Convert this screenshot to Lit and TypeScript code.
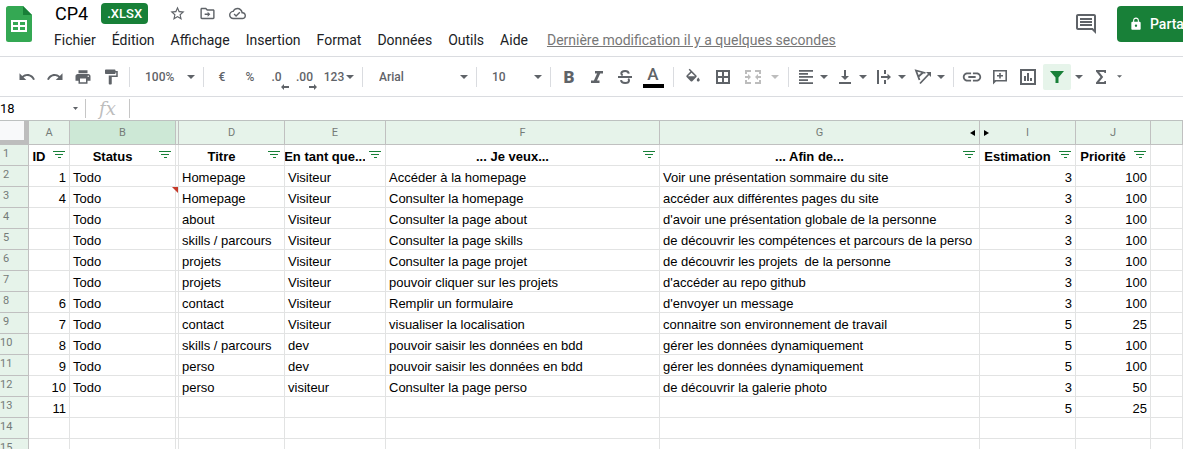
import { LitElement, html, css, svg, nothing } from "lit";
import { customElement } from "lit/decorators.js";
import { classMap } from "lit/directives/class-map.js";

type Align = "left" | "right";
interface Column {
  letter: string;
  width: string;
  title: string;
  align: Align;
  selected?: boolean;
  hiddenAfter?: boolean;
  hiddenBefore?: boolean;
}

const COLUMNS: Column[] = [
  { letter: "A", width: "a", title: "ID", align: "right" },
  { letter: "B", width: "b", title: "Status", align: "left", selected: true },
  { letter: "", width: "c", title: "", align: "left" },
  { letter: "D", width: "d", title: "Titre", align: "left" },
  { letter: "E", width: "e", title: "En tant que...", align: "left" },
  { letter: "F", width: "f", title: "... Je veux...", align: "left" },
  { letter: "G", width: "g", title: "... Afin de...", align: "left", hiddenAfter: true },
  { letter: "I", width: "i", title: "Estimation", align: "right", hiddenBefore: true },
  { letter: "J", width: "j", title: "Priorité", align: "right" },
  { letter: "", width: "rest", title: "", align: "left" },
];

const ROWS: string[][] = [
  ["1", "Todo", "", "Homepage", "Visiteur", "Accéder à la homepage", "Voir une présentation sommaire du site", "3", "100", ""],
  ["4", "Todo", "", "Homepage", "Visiteur", "Consulter la homepage", "accéder aux différentes pages du site", "3", "100", ""],
  ["", "Todo", "", "about", "Visiteur", "Consulter la page about", "d'avoir une présentation globale de la personne", "3", "100", ""],
  ["", "Todo", "", "skills / parcours", "Visiteur", "Consulter la page skills", "de découvrir les compétences et parcours de la perso", "3", "100", ""],
  ["", "Todo", "", "projets", "Visiteur", "Consulter la page projet", "de découvrir les projets  de la personne", "3", "100", ""],
  ["", "Todo", "", "projets", "Visiteur", "pouvoir cliquer sur les projets", "d'accéder au repo github", "3", "100", ""],
  ["6", "Todo", "", "contact", "Visiteur", "Remplir un formulaire", "d'envoyer un message", "3", "100", ""],
  ["7", "Todo", "", "contact", "Visiteur", "visualiser la localisation", "connaitre son environnement de travail", "5", "25", ""],
  ["8", "Todo", "", "skills / parcours", "dev", "pouvoir saisir les données en bdd", "gérer les données dynamiquement", "5", "100", ""],
  ["9", "Todo", "", "perso", "dev", "pouvoir saisir les données en bdd", "gérer les données dynamiquement", "5", "100", ""],
  ["10", "Todo", "", "perso", "visiteur", "Consulter la page perso", "de découvrir la galerie photo", "3", "50", ""],
  ["11", "", "", "", "", "", "", "5", "25", ""],
  ["", "", "", "", "", "", "", "", "", ""],
  ["", "", "", "", "", "", "", "", "", ""],
];

const NOTE_ROW = 3;

const icon24 = (d: string, cls = "ic18", viewBox = "0 0 24 24") =>
  html`<svg class=${cls} viewBox=${viewBox} aria-hidden="true"><path d=${d} /></svg>`;
const icon18 = (d: string) =>
  html`<svg class="ic18" viewBox="0 0 18 18" aria-hidden="true"><path fill-rule="evenodd" d=${d} /></svg>`;
const caret = html`<svg class="caret" viewBox="0 0 8 4" aria-hidden="true"><path d="M0 0h8L4 4z" /></svg>`;

@customElement("sheet-header")
export class SheetHeader extends LitElement {
  static styles = css`
    :host {
      display: flex;
      flex: none;
      height: 56px;
      border-bottom: 1px solid #dadce0;
      background: #fff;
      font-family: Roboto, sans-serif;
      color: #202124;
    }
    button {
      border: 0;
      background: none;
      padding: 0;
      font: inherit;
      color: inherit;
      white-space: nowrap;
    }
    svg { display: block; fill: #5f6368; }
    .logo { flex: none; width: 26px; height: 36px; margin: 6px 15px 0 6px; }
    .titles { flex: 1; min-width: 0; }
    .title-row { display: flex; align-items: center; height: 27px; padding-left: 8px; }
    .title { margin: 0; font-size: 18px; font-weight: 400; line-height: 24px; color: #000; }
    .badge {
      margin: 0 14px 0 13px;
      padding: 0 6px;
      border-radius: 4px;
      background: #188038;
      color: #fff;
      font-size: 13px;
      font-weight: 500;
      line-height: 21px;
    }
    .title-row button { width: 30px; display: flex; justify-content: center; }
    .title-row svg { width: 17px; height: 17px; }
    .menus {
      display: flex;
      align-items: center;
      gap: 16px;
      height: 26px;
      padding-left: 7px;
      font-size: 14px;
      line-height: 24px;
    }
    .menus a { margin-left: 3px; color: #777; white-space: nowrap; text-decoration: underline; }
    .actions { display: flex; flex: none; align-items: flex-start; padding-top: 6px; }
    .comments { display: flex; align-items: center; height: 36px; margin-right: 19px; }
    .comments svg { width: 24px; height: 24px; }
    .share {
      display: flex;
      align-items: center;
      gap: 7px;
      height: 36px;
      width: 66px;
      padding-left: 12px;
      overflow: hidden;
      border-radius: 4px 0 0 4px;
      background: #188038;
      color: #fff;
      font-size: 14px;
      font-weight: 500;
    }
    .share svg { flex: none; width: 14px; height: 14px; fill: #fff; }
  `;

  private menus = ["Fichier", "Édition", "Affichage", "Insertion", "Format", "Données", "Outils", "Aide"];

  render() {
    return html`
      <svg class="logo" viewBox="0 0 26 36" aria-hidden="true">
        <path fill="#34a853" d="M2.5 0H17l9 9v24.500A2.500 2.500 0 0 1 23.500 36h-21A2.500 2.500 0 0 1 0 33.500v-31A2.500 2.500 0 0 1 2.500 0z" />
        <path fill="#188038" d="M17 0l9 9h-9z" />
        <path fill="#fff" fill-rule="evenodd" d="M5 14h16v12H5zM7 16v3h5v-3zM14 16v3h5v-3zM7 21v3h5v-3zM14 21v3h5v-3z" />
      </svg>
      <div class="titles">
        <div class="title-row">
          <h1 class="title">CP4</h1>
          <span class="badge">.XLSX</span>
          <button aria-label="Suivre">${icon24("M22 9.240l-7.190-.620L12 2 9.190 8.630 2 9.240l5.460 4.730L5.820 21 12 17.270 18.180 21l-1.630-7.030L22 9.240zM12 15.400l-3.760 2.270 1-4.280-3.320-2.880 4.380-.380L12 6.100l1.710 4.040 4.380.380-3.320 2.880 1 4.280L12 15.400z")}</button>
          <button aria-label="Déplacer">${icon24("M20 6h-8l-2-2H4c-1.100 0-2 .9-2 2v12c0 1.100.9 2 2 2h16c1.100 0 2-.9 2-2V8c0-1.100-.9-2-2-2zm0 12H4V6h5.200l2 2H20v10zM12.200 16.500L16 13l-3.800-3.500V12H8v2h4.200z")}</button>
          <button aria-label="État du document">${icon24("M19.350 10.040C18.670 6.590 15.640 4 12 4 9.110 4 6.600 5.640 5.350 8.040 2.340 8.360 0 10.910 0 14c0 3.310 2.690 6 6 6h13c2.760 0 5-2.240 5-5 0-2.640-2.050-4.780-4.650-4.960zM19 18H6c-2.210 0-4-1.790-4-4 0-2.050 1.530-3.760 3.560-3.970l1.070-.110.5-.95C8.080 7.140 9.940 6 12 6c2.620 0 4.880 1.860 5.390 4.430l.3 1.500 1.530.110C20.780 12.140 22 13.450 22 15c0 1.650-1.350 3-3 3zm-9-3.820l-2.090-2.090L6.500 13.500 10 17l6.010-6.010-1.410-1.410z")}</button>
        </div>
        <nav class="menus">
          ${this.menus.map((m) => html`<button>${m}</button>`)}
          <a href="#historique">Dernière modification il y a quelques secondes</a>
        </nav>
      </div>
      <div class="actions">
        <button class="comments" aria-label="Commentaires">${icon24("M21.990 4c0-1.100-.890-2-1.990-2H4c-1.100 0-2 .9-2 2v12c0 1.100.9 2 2 2h14l4 4-.010-18zM20 4v13.170L18.830 16H4V4h16zM6 12h12v2H6zm0-3h12v2H6zm0-3h12v2H6z")}</button>
        <button class="share">
          ${icon24("M18 8h-1V6c0-2.760-2.240-5-5-5S7 3.240 7 6v2H6c-1.100 0-2 .9-2 2v10c0 1.100.9 2 2 2h12c1.100 0 2-.9 2-2V10c0-1.100-.9-2-2-2zm-6 9c-1.100 0-2-.9-2-2s.9-2 2-2 2 .9 2 2-.9 2-2 2zm3.100-9H8.900V6c0-1.710 1.390-3.100 3.100-3.100s3.100 1.390 3.100 3.100v2z")}
          <span>Parta</span>
        </button>
      </div>
    `;
  }
}

@customElement("sheet-toolbar")
export class SheetToolbar extends LitElement {
  static styles = css`
    :host {
      display: flex;
      flex: none;
      align-items: center;
      height: 39px;
      padding-left: 13px;
      border-bottom: 1px solid #dadce0;
      background: #fff;
      overflow: hidden;
      font: 500 12px Roboto, sans-serif;
      color: #5f6368;
    }
    button {
      display: flex;
      flex: none;
      align-items: center;
      justify-content: center;
      width: 28px;
      height: 26px;
      padding: 0;
      border: 0;
      background: none;
      font: inherit;
      color: inherit;
    }
    svg { flex: none; display: block; fill: currentColor; }
    .ic18 { width: 18px; height: 18px; }
    .ic22 { width: 22px; height: 22px; }
    .caret { width: 8px; height: 4px; }
    .sep { flex: none; width: 1px; height: 20px; margin: 0 4px; background: #dadce0; }
    .sep.tight { margin-right: 0; }
    .sep.flush { margin: 0; }
    .sep.after { margin-left: 0; }
    .sep.spaced { margin-left: 6px; }
    .pick { display: grid; flex: none; align-items: center; }
    .pick > * { grid-area: 1 / 1; }
    .pick select {
      width: 100%;
      height: 26px;
      padding: 0 0 0 15px;
      border: 0;
      background: none;
      appearance: none;
      font: inherit;
      color: inherit;
    }
    .pick svg { justify-self: end; margin-right: 8px; pointer-events: none; }
    .pick.small { width: 73px; }
    .pick.wide { width: 113px; }
    .pick.wide select { padding-left: 16px; }
    .decimal { position: relative; padding-right: 3px; }
    .decimal svg { position: absolute; right: 3px; bottom: 0; width: 8px; height: 6px; }
    .format { width: 38px; gap: 2px; }
    .bold { font-size: 17px; font-weight: 900; }
    .color { flex-direction: column; }
    .color span { font-size: 17px; line-height: 19px; }
    .color i { width: 21px; height: 4px; background: #000; }
    .roomy { width: 30px; }
    .combo { width: 39px; gap: 5px; }
    .merge { width: 46px; gap: 9px; color: #bdbdbd; }
    .filter { border-radius: 2px; background: #e6f4ea; color: #188038; margin-left: 1px; }
    .more { width: 16px; }
    .sum { width: 36px; gap: 7px; padding-left: 3px; }
    .sum .caret { width: 5px; height: 3px; }
  `;

  render() {
    return html`
      <button aria-label="Annuler">${icon24("M12.500 8c-2.650 0-5.050.990-6.900 2.600L2 7v9h9l-3.620-3.620c1.390-1.160 3.160-1.880 5.120-1.880 3.540 0 6.550 2.310 7.600 5.500l2.370-.780C21.080 11.030 17.150 8 12.500 8z")}</button>
      <button aria-label="Rétablir">${icon24("M18.400 10.600C16.550 8.990 14.150 8 11.500 8c-4.650 0-8.580 3.030-9.960 7.220L3.900 16c1.050-3.190 4.050-5.500 7.600-5.500 1.950 0 3.730.720 5.120 1.880L13 16h9V7l-3.600 3.600z")}</button>
      <button aria-label="Imprimer">${icon24("M19 8H5c-1.660 0-3 1.340-3 3v6h4v4h12v-4h4v-6c0-1.660-1.340-3-3-3zm-3 11H8v-5h8v5zm3-7c-.550 0-1-.450-1-1s.450-1 1-1 1 .450 1 1-.450 1-1 1zm-1-9H6v4h12V3z")}</button>
      <button aria-label="Reproduire la mise en forme">${icon24("M18 4V3c0-.550-.450-1-1-1H5c-.550 0-1 .450-1 1v4c0 .550.450 1 1 1h12c.550 0 1-.450 1-1V6h1v4H9v11c0 .550.450 1 1 1h2c.550 0 1-.450 1-1v-9h8V4h-3z")}</button>
      <span class="sep tight"></span>
      <label class="pick small"><select aria-label="Zoom"><option>100%</option></select>${caret}</label>
      <span class="sep after"></span>
      <button aria-label="Format monétaire">€</button>
      <button aria-label="Format pourcentage">%</button>
      <button class="decimal" aria-label="Moins de décimales">.0<svg viewBox="0 0 8 6"><path d="M0 3l3-3v2h5v2H3v2z" /></svg></button>
      <button class="decimal" aria-label="Plus de décimales">.00<svg viewBox="0 0 8 6"><path d="M8 3L5 0v2H0v2h5v2z" /></svg></button>
      <button class="format" aria-label="Autres formats">123${caret}</button>
      <span class="sep tight"></span>
      <label class="pick wide"><select aria-label="Police"><option>Arial</option></select>${caret}</label>
      <span class="sep flush"></span>
      <label class="pick small"><select aria-label="Taille"><option>10</option></select>${caret}</label>
      <span class="sep after"></span>
      <button class="bold" aria-label="Gras">B</button>
      <button aria-label="Italique">${icon18("M7 3h8v2.500h-2.800l-3.200 7h2.500V15H3v-2.500h2.900l3.200-7H7z")}</button>
      <button aria-label="Barré">
        <svg class="ic18" viewBox="0 0 18 18"><g fill="none" stroke="currentColor" stroke-width="2"><path d="M12.800 5.600C12.500 3.700 11 3 9.100 3 6.800 3 5.300 4 5.300 5.500c0 1 .6 1.500 1.400 1.900M5 12.200C5.200 14.200 7 15 9.100 15c2.300 0 3.900-.9 3.900-2.500 0-.8-.3-1.400-.8-1.800M2 9h14" /></g></svg>
      </button>
      <button class="color" aria-label="Couleur du texte"><span>A</span><i></i></button>
      <span class="sep spaced"></span>
      <button class="roomy" aria-label="Couleur de remplissage">${icon24("M16.560 8.940L7.620 0 6.210 1.410l2.380 2.380-5.150 5.150c-.590.590-.590 1.540 0 2.120l5.500 5.500c.290.290.680.440 1.060.440s.770-.150 1.060-.440l5.500-5.500c.590-.580.590-1.530 0-2.120zM5.210 10L10 5.210 14.790 10H5.210zM19 11.500s-2 2.170-2 3.500c0 1.100.9 2 2 2s2-.9 2-2c0-1.330-2-3.500-2-3.500z", "ic18", "0 -1 24 24")}</button>
      <button class="roomy" aria-label="Bordures">${icon18("M2 2h14v14H2zM4 4v4h4V4zM10 4v4h4V4zM4 10v4h4v-4zM10 10v4h4v-4z")}</button>
      <button class="merge" aria-label="Fusionner">${icon18("M1 2h6v2H3v2H1zM11 2h6v4h-2V4h-4zM1 12h2v2h4v2H1zM15 12h2v4h-6v-2h4zM1 8h3V6l3 3-3 3v-2H1zM17 8h-3V6l-3 3 3 3v-2h3z")}${caret}</button>
      <span class="sep"></span>
      <button class="combo" aria-label="Alignement horizontal">${icon18("M2 2h14v1.700H2zM2 5.100h9v1.700H2zM2 8.100h14v1.700H2zM2 11.200h9v1.700H2zM2 14.300h14V16H2z")}${caret}</button>
      <button class="combo" aria-label="Alignement vertical">${icon18("M3 14h12v2H3zM8 2h2v6h3l-4 4-4-4h3z")}${caret}</button>
      <button class="combo" aria-label="Retour à la ligne">${icon18("M2 2h2v14H2zM9 2h2v4H9zM9 12h2v4H9zM6 8h6.500V5.800L16 9l-3.500 3.200V10H6z")}${caret}</button>
      <button class="combo" aria-label="Rotation du texte">
        <svg class="ic18" viewBox="0 0 18 18"><path d="M12 4H17v5z" /><g fill="none" stroke="currentColor" stroke-width="1.800"><path d="M11.500 5L2 2.500l3.500 9.500M9 4.500L4.500 8.500M6 15.500l9-9.500" /></g></svg>
        ${caret}
      </button>
      <span class="sep"></span>
      <button aria-label="Insérer un lien">${icon24("M3.900 12c0-1.710 1.390-3.100 3.100-3.100h4V7H7c-2.760 0-5 2.240-5 5s2.240 5 5 5h4v-1.900H7c-1.710 0-3.100-1.390-3.100-3.100zM8 13h8v-2H8v2zm9-6h-4v1.900h4c1.710 0 3.100 1.390 3.100 3.100s-1.390 3.100-3.100 3.100h-4V17h4c2.760 0 5-2.240 5-5s-2.240-5-5-5z", "ic22")}</button>
      <button aria-label="Insérer un commentaire">${icon18("M2 2h14v11.500H5L2 16.500zM3.600 3.600v8.600l.8-.3h10V3.600zM8.200 5h1.600v2H12v1.600H9.800v2H8.200v-2H6V7h2.200z")}</button>
      <button aria-label="Insérer un graphique">${icon18("M1 1h16v16H1zM3 3v12h12V3zM5 8h2v5H5zM8 5h2v8H8zM11 10h2v3h-2z")}</button>
      <button class="filter" aria-label="Filtre">${icon18("M2 3h14l-5.500 6.500V15h-3V9.500z")}</button>
      <button class="more" aria-label="Vues filtrées">${caret}</button>
      <button class="sum" aria-label="Fonctions">${icon18("M4 2h10v3H12.300V4H7.200l4 5-4 5h5.100v-1H14v3H4v-1.500L8.500 9 4 3.500z")}${caret}</button>
    `;
  }
}

@customElement("formula-bar")
export class FormulaBar extends LitElement {
  static styles = css`
    :host {
      display: flex;
      flex: none;
      align-items: center;
      height: 23px;
      border-bottom: 1px solid #bdc1c0;
      background: #fff;
      font-family: Roboto, sans-serif;
    }
    input {
      min-width: 0;
      height: 20px;
      padding: 0;
      border: 0;
      outline: 0;
      background: none;
      font: 13px Roboto, sans-serif;
      color: #000;
    }
    .name { display: flex; align-items: center; width: 85px; }
    .name input { flex: 1; }
    .name svg { width: 5px; height: 3px; margin-right: 7px; fill: #5f6368; }
    .sep { flex: none; width: 1px; height: 19px; background: #c6c6c6; }
    .fx {
      width: 43px;
      text-align: center;
      font: italic 18px "DejaVu Serif", serif;
      line-height: 20px;
      color: #bdbdbd;
    }
    .formula { flex: 1; padding-left: 4px; }
  `;

  render() {
    return html`
      <div class="name">
        <input aria-label="Zone de nom" value="18" />
        <svg viewBox="0 0 8 4" preserveAspectRatio="none"><path d="M0 0h8L4 4z" /></svg>
      </div>
      <span class="sep"></span>
      <label class="fx" for="formula">fx</label>
      <span class="sep"></span>
      <input id="formula" class="formula" />
    `;
  }
}

@customElement("sheet-grid")
export class SheetGrid extends LitElement {
  static styles = css`
    :host {
      display: block;
      flex: 1;
      min-height: 0;
      overflow: hidden;
      background: #fff;
    }
    table {
      width: 100%;
      table-layout: fixed;
      border-collapse: separate;
      border-spacing: 0;
      font: 13px "Liberation Sans", Arial, sans-serif;
      color: #000;
    }
    .w-head { width: 29px; }
    .w-a { width: 41px; }
    .w-b, .w-d { width: 106px; }
    .w-c { width: 3px; }
    .w-e { width: 101px; }
    .w-f { width: 274px; }
    .w-g { width: 320px; }
    .w-i { width: 96px; }
    .w-j { width: 75px; }
    th, td {
      box-sizing: border-box;
      height: 21px;
      padding: 0;
      border-right: 1px solid #e2e3e3;
      border-bottom: 1px solid #e2e3e3;
      font-weight: inherit;
      line-height: 16px;
    }
    td { padding: 0 3px; vertical-align: bottom; text-align: left; overflow: hidden; white-space: pre; }
    td.right { text-align: right; }
    td.narrow { position: relative; padding: 0; overflow: visible; }
    .col, .row, .corner {
      border-color: #c0c0c0;
      background: #e6f3ea;
      color: #757b78;
      font: 11px Roboto, sans-serif;
    }
    .col { position: relative; height: 24px; text-align: center; }
    .selected { background: #cde8d6; }
    .corner {
      height: 24px;
      border-right: 5px solid #bdbdbd;
      border-bottom: 5px solid #bdbdbd;
      background: #f8f9fa;
    }
    .row span { display: block; width: 12px; padding-bottom: 3px; text-align: center; }
    .filter-cell { padding: 0; }
    .heading { display: grid; grid-template-columns: minmax(0, 1fr) 20px; height: 16px; }
    .heading b { display: flex; justify-content: center; overflow: hidden; }
    button { padding: 0; border: 0; background: none; }
    .heading button { display: flex; align-items: center; justify-content: center; padding-right: 1px; padding-bottom: 5px; }
    .heading svg { width: 12px; height: 7px; fill: #188038; }
    .jump { position: absolute; top: 9px; width: 5px; height: 6px; }
    .jump svg { display: block; width: 5px; height: 6px; }
    .after { right: 4px; }
    .before { left: 4px; }
    .note { position: absolute; top: 0; right: 0; width: 6px; height: 6px; background: #c53929; clip-path: polygon(0 0, 100% 0, 100% 100%); }
  `;

  private columnHeader(c: Column) {
    return html`<th scope="col" class=${classMap({ col: true, selected: !!c.selected })}>
      ${c.letter}
      ${c.hiddenAfter
        ? html`<button class="jump after" aria-label="Afficher la colonne H"><svg viewBox="0 0 5 6">${svg`<path d="M5 0v6L0 3z" />`}</svg></button>`
        : nothing}
      ${c.hiddenBefore
        ? html`<button class="jump before" aria-label="Afficher la colonne masquée"><svg viewBox="0 0 5 6">${svg`<path d="M0 0v6l5-3z" />`}</svg></button>`
        : nothing}
    </th>`;
  }

  private headingCell(c: Column) {
    return c.title
      ? html`<td class="filter-cell"><div class="heading"><b>${c.title}</b><button aria-label="Filtrer"><svg viewBox="0 0 12 7"><path d="M0 0h12v1H0zM2 3h8v1H2zM5 6h3v1H5z" /></svg></button></div></td>`
      : html`<td class="filter-cell"></td>`;
  }

  private cell(c: Column, value: string, row: number) {
    const narrow = c.width === "c";
    return html`<td class=${classMap({ right: c.align === "right", narrow })}>${value}${narrow && row === NOTE_ROW ? html`<i class="note"></i>` : nothing}</td>`;
  }

  render() {
    return html`
      <table>
        <colgroup>
          <col class="w-head" />
          ${COLUMNS.map((c) => html`<col class=${"w-" + c.width} />`)}
        </colgroup>
        <thead>
          <tr><th class="corner"></th>${COLUMNS.map((c) => this.columnHeader(c))}</tr>
        </thead>
        <tbody>
          <tr><th scope="row" class="row"><span>1</span></th>${COLUMNS.map((c) => this.headingCell(c))}</tr>
          ${ROWS.map((r, i) => html`<tr><th scope="row" class="row"><span>${i + 2}</span></th>${COLUMNS.map((c, k) => this.cell(c, r[k], i + 2))}</tr>`)}
        </tbody>
      </table>
    `;
  }
}

@customElement("app-root")
export class AppRoot extends LitElement {
  static styles = css`
    :host {
      display: flex;
      flex-direction: column;
      height: 100vh;
      overflow: hidden;
      background: #fff;
    }
  `;

  render() {
    return html`
      <sheet-header></sheet-header>
      <sheet-toolbar></sheet-toolbar>
      <formula-bar></formula-bar>
      <sheet-grid></sheet-grid>
    `;
  }
}
